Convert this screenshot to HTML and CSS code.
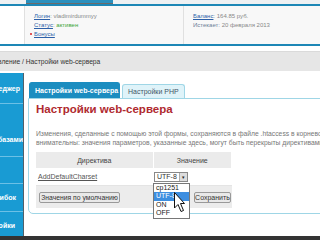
FILE: index.html
```html
<!DOCTYPE html>
<html lang="ru">
<head>
  <meta charset="UTF-8">
  <title>Настройки web-сервера</title>
  <link rel="stylesheet" href="styles.css">
</head>
<body>
  <div class="top-strip"><div class="top-tab"></div></div>

  <div class="userbar">
    <div class="gutter"></div>
    <div class="user-col">
      <div><a href="#">Логин</a>: <span class="val">vladimirdummyy</span></div>
      <div><a href="#">Статус</a>: <span class="ok">активен</span></div>
      <div class="bonus"><a href="#">Бонусы</a></div>
    </div>
    <div class="user-col last">
      <div><a href="#">Баланс</a>: <span class="val">164.85 руб.</span></div>
      <div><span class="lbl">Истекает:</span> <span class="val">20 февраля 2013</span></div>
    </div>
  </div>

  <div class="crumbs"><span>Управление / Настройки web-сервера</span></div>

  <div class="layout">
    <ul class="sidebar">
      <li class="item-1"><span>Файловый менеджер</span></li>
      <li class="item-2"><span>Управление базами</span></li>
      <li class="item-3"><span>Логи</span></li>
      <li class="item-4"><span>Журнал ошибок</span></li>
      <li class="item-5"><span>Настройки</span></li>
    </ul>

    <div class="content">
      <div class="tabs">
        <div class="tab active">Настройки web-сервера</div>
        <div class="tab">Настройки PHP</div>
      </div>

      <div class="panel">
        <h1>Настройки web-сервера</h1>
        <p class="note">
          Изменения, сделанные с помощью этой формы, сохраняются в файле .htaccess в корневой директории сайта. Будьте<br>
          внимательны: значения параметров, указанные здесь, могут быть перекрыты директивами .htaccess в подкаталогах.
        </p>

        <table class="settings">
          <tr class="head">
            <th class="col-name">Директива</th>
            <th class="col-value">Значение</th>
          </tr>
          <tr class="row">
            <td class="col-name"><a href="#">AddDefaultCharset</a></td>
            <td class="col-value">
              <div class="select-wrap">
                <div class="select">UTF-8<span class="arrow">&#9662;</span></div>
                <ul class="options">
                  <li>cp1251</li>
                  <li class="picked">UTF-8</li>
                  <li>ON</li>
                  <li>OFF</li>
                </ul>
                <svg class="cursor" width="11" height="21" viewBox="0 0 11 21">
                  <path d="M0.5 0.5 L0.5 16 L4 12.5 L7 19.5 L9.5 18.5 L6.5 11.5 L10.5 11.5 Z" fill="#fff" stroke="#111" stroke-width="1"/>
                </svg>
              </div>
            </td>
          </tr>
          <tr class="actions">
            <td class="col-name"><button class="reset">Значения по умолчанию</button></td>
            <td class="col-value"><button class="save">Сохранить</button></td>
          </tr>
        </table>
      </div>
    </div>
  </div>

  <div class="footer"></div>
</body>
</html>
```

FILE: styles.css
```css
html, body {
  margin: 0;
  padding: 0;
}
body {
  width: 320px;
  height: 240px;
  overflow: hidden;
  display: flex;
  flex-direction: column;
  font-family: "Liberation Sans", Arial, sans-serif;
  background-color: #fff;
  color: #333;
}
a {
  color: #2c5fa8;
}

.top-strip {
  height: 4px;
  flex-shrink: 0;
  background-color: #eef1f3;
  border-bottom: 2px solid #1d87b6;
  padding-left: 26px;
}
.top-tab {
  width: 87px;
  height: 3px;
  background-color: #2a8fbd;
  border-bottom: 1px solid #6a6a6a;
}

.userbar {
  height: 38px;
  flex-shrink: 0;
  display: flex;
  background-color: #f8f8f8;
  border-bottom: 2px solid #1d87b6;
  font-size: 6px;
  line-height: 9px;
  color: #888;
}
.gutter {
  width: 24px;
  background-color: #fff;
  border-right: 1px solid #e0e0e0;
}
.user-col {
  width: 149px;
  padding: 6px 0 0 9px;
  border-right: 1px solid #e0e0e0;
}
.user-col.last {
  flex: 1;
  border-right: none;
}
.user-col .ok {
  color: #3aa53a;
}
.user-col .lbl {
  color: #6d7f99;
}
.bonus::before {
  content: "";
  display: inline-block;
  width: 2px;
  height: 2px;
  background-color: #d22;
  border-radius: 50%;
  margin: 0 2px 1px -4px;
}

.crumbs {
  height: 20px;
  flex-shrink: 0;
  margin: 5px 0 2px 0;
  background-color: #e6e6e6;
  border-top: 1px solid #dadada;
  box-sizing: border-box;
  font-size: 6.7px;
  line-height: 19px;
  white-space: nowrap;
  overflow: hidden;
  color: #333;
}
.crumbs span {
  margin-left: -17px;
}

.layout {
  flex: 1;
  display: flex;
  min-height: 0;
}

.sidebar {
  list-style: none;
  margin: 0;
  padding: 0;
  width: 23px;
  flex-shrink: 0;
  background-color: #199bd3;
  border-right: 1px solid #50606a;
  overflow: hidden;
}
.sidebar li {
  display: flex;
  justify-content: flex-end;
  overflow: hidden;
  white-space: nowrap;
  border-bottom: 1px solid #6cc0e6;
  color: #fff;
  font-size: 7px;
  font-weight: bold;
  line-height: 8px;
  box-sizing: border-box;
}
.sidebar .item-1 { height: 31px; padding: 12px 3px 0 0; }
.sidebar .item-2 { height: 53px; padding: 32px 0 0 0; }
.sidebar .item-3 { height: 27px; padding: 10px 30px 0 0; }
.sidebar .item-4 { height: 28px; padding: 10px 7px 0 0; }
.sidebar .item-5 { height: 30px; padding: 10px 8px 0 0; border-bottom: none; }

.content {
  flex: 1;
  padding: 9px 0 0 4px;
  min-width: 0;
}

.tabs {
  display: flex;
  align-items: flex-end;
  gap: 2px;
  padding-left: 1px;
}
.tab {
  height: 13px;
  padding: 0 5px;
  font-size: 7px;
  line-height: 13px;
  color: #456;
  background-color: #dff3f9;
  border: 1px solid #9fd6e6;
  border-bottom: none;
  border-radius: 3px 3px 0 0;
  white-space: nowrap;
}
.tab.active {
  height: 15px;
  line-height: 15px;
  padding: 0 5px;
  width: 79px;
  color: #fff;
  font-weight: bold;
  background-color: #1b8dc0;
  border-color: #1b8dc0;
}

.panel {
  width: 400px;
  height: 116px;
  border: 1px solid #9fd6e6;
  border-radius: 0 0 0 5px;
  padding: 2px 0 0 7px;
  box-sizing: border-box;
}
.panel h1 {
  margin: 0;
  font-size: 11.5px;
  line-height: 16px;
  color: #b02a30;
  white-space: nowrap;
}
.note {
  margin: 12px 0 0 0;
  font-size: 6.75px;
  line-height: 9px;
  color: #777;
  white-space: nowrap;
}

.settings {
  margin-top: 5px;
  border-collapse: collapse;
  width: 196px;
  font-size: 7px;
}
.settings .col-name {
  width: 114px;
}
.settings .head th {
  height: 16px;
  padding: 0;
  font-weight: normal;
  color: #444;
  background-color: #ebebeb;
  border-right: 1px solid #fff;
}
.settings .row td {
  height: 17px;
  padding: 0;
  border-bottom: 1px solid #e4e4e4;
}
.settings .row .col-name {
  padding-left: 2px;
}
.settings .row a {
  color: #555;
}
.settings .actions td {
  height: 22px;
  padding: 0;
  background-color: #ececec;
}
.settings .actions .col-name {
  padding-left: 3px;
}
.settings .actions .col-value {
  padding-left: 41px;
}

.select-wrap {
  position: relative;
  margin-left: 1px;
  width: 34px;
}
.select {
  height: 10px;
  box-sizing: border-box;
  border: 1px solid #888;
  background-color: #fff;
  line-height: 8px;
  padding-left: 2px;
  color: #333;
  position: relative;
}
.select .arrow {
  position: absolute;
  right: 0;
  top: 0;
  width: 7px;
  height: 8px;
  background-color: #dcdcdc;
  border-left: 1px solid #aaa;
  font-size: 5px;
  line-height: 8px;
  text-align: center;
  color: #222;
}
.options {
  position: absolute;
  left: -1px;
  top: 11px;
  width: 35px;
  margin: 0;
  padding: 0;
  list-style: none;
  background-color: #fff;
  border: 1px solid #777;
  z-index: 2;
}
.options li {
  height: 8.5px;
  line-height: 8.5px;
  padding-left: 2px;
  color: #222;
}
.options li.picked {
  background-color: #3d8ee0;
  color: #fff;
}
.cursor {
  position: absolute;
  left: 20px;
  top: 20px;
  z-index: 3;
}

button {
  height: 11px;
  padding: 0 3px;
  font-family: "Liberation Sans", Arial, sans-serif;
  font-size: 7px;
  line-height: 9px;
  color: #333;
  background-color: #e9e9e9;
  border: 1px solid #999;
  border-radius: 2px;
  white-space: nowrap;
}
button.reset {
  width: 81px;
  padding: 0;
  font-size: 6.8px;
}
button.save {
  width: 37px;
  padding: 0;
}

.footer {
  height: 4px;
  flex-shrink: 0;
  background-color: #333;
}
```
